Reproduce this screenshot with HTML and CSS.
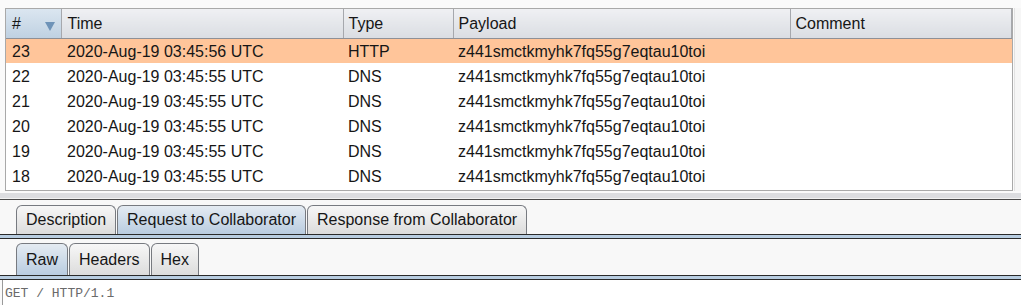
FILE: index.html
```html
<!DOCTYPE html>
<html lang="en">
<head>
    <meta charset="UTF-8">
    <title>Collaborator interactions</title>
    <link rel="stylesheet" href="styles.css">
</head>
<body>
    <div class="results-wrap">
        <div class="results">
            <table class="grid">
                <thead>
                    <tr>
                        <th class="col-num sorted">#<span class="sort-arrow"></span></th>
                        <th class="col-time">Time</th>
                        <th class="col-type">Type</th>
                        <th class="col-payload">Payload</th>
                        <th>Comment</th>
                    </tr>
                </thead>
                <tbody>
                    <tr class="selected">
                        <td>23</td><td>2020-Aug-19 03:45:56 UTC</td><td>HTTP</td><td>z441smctkmyhk7fq55g7eqtau10toi</td><td></td>
                    </tr>
                    <tr>
                        <td>22</td><td>2020-Aug-19 03:45:55 UTC</td><td>DNS</td><td>z441smctkmyhk7fq55g7eqtau10toi</td><td></td>
                    </tr>
                    <tr>
                        <td>21</td><td>2020-Aug-19 03:45:55 UTC</td><td>DNS</td><td>z441smctkmyhk7fq55g7eqtau10toi</td><td></td>
                    </tr>
                    <tr>
                        <td>20</td><td>2020-Aug-19 03:45:55 UTC</td><td>DNS</td><td>z441smctkmyhk7fq55g7eqtau10toi</td><td></td>
                    </tr>
                    <tr>
                        <td>19</td><td>2020-Aug-19 03:45:55 UTC</td><td>DNS</td><td>z441smctkmyhk7fq55g7eqtau10toi</td><td></td>
                    </tr>
                    <tr>
                        <td>18</td><td>2020-Aug-19 03:45:55 UTC</td><td>DNS</td><td>z441smctkmyhk7fq55g7eqtau10toi</td><td></td>
                    </tr>
                </tbody>
            </table>
        </div>
        <div class="scroll-edge"></div>
    </div>

    <div class="splitter"></div>

    <div class="tab-bar outer">
        <div class="tab">Description</div>
        <div class="tab active">Request to Collaborator</div>
        <div class="tab">Response from Collaborator</div>
    </div>
    <div class="tab-rule"></div>

    <div class="tab-bar inner">
        <div class="tab active">Raw</div>
        <div class="tab">Headers</div>
        <div class="tab">Hex</div>
    </div>
    <div class="tab-rule"></div>

    <div class="editor">GET / HTTP/1.1</div>
</body>
</html>
```

FILE: styles.css
```css
body {
    margin: 0;
    background: #fafafa;
    font-family: "Liberation Sans", Arial, sans-serif;
    font-size: 16px;
    color: #161616;
    height: 305px;
    overflow: hidden;
}
.results-wrap {
    display: flex;
    padding-top: 8px;
    padding-left: 5px;
}
.results {
    flex: 1;
    height: 181px;
    border: 1px solid #a9a9a9;
    background: #ffffff;
    overflow: hidden;
}
.scroll-edge {
    width: 6px;
    border-left: 1px solid #e2e2e2;
    margin-left: 1px;
    background: #f6f6f6;
}
.grid {
    width: 100%;
    border-collapse: collapse;
    table-layout: fixed;
}
.grid th {
    box-sizing: border-box;
    height: 29px;
    padding: 2px 0 0 5px;
    text-align: left;
    font-weight: normal;
    background: linear-gradient(#eff0f3, #dadde2);
    border-right: 1px solid #a6a8ad;
    border-bottom: 1px solid #8e9096;
}
.grid th.col-num {
    width: 55px;
    padding-left: 6px;
}
.grid th.col-time {
    width: 282px;
    padding-left: 6px;
}
.grid th.col-type {
    width: 110px;
}
.grid th.col-payload {
    width: 337px;
}
.grid th.sorted {
    background: linear-gradient(#dbe6f0, #bfd1e2);
}
.sort-arrow {
    float: right;
    margin: 7px 6px 0 0;
    width: 0;
    height: 0;
    border-left: 5px solid transparent;
    border-right: 5px solid transparent;
    border-top: 9px solid #6e93b8;
}
.grid td {
    box-sizing: border-box;
    height: 25px;
    padding: 2px 0 0 5px;
    white-space: nowrap;
    overflow: hidden;
}
.grid td:first-child,
.grid td:nth-child(2) {
    padding-left: 6px;
}
.grid tr.selected td {
    background: #ffc59a;
}
.splitter {
    margin-top: 2px;
    height: 5px;
    background: #dcdde0;
    border-bottom: 1px solid #f2f2f2;
}
.tab-bar {
    display: flex;
    align-items: flex-end;
    gap: 1px;
    padding-left: 16px;
    border-top: 1px solid #4a4a4a;
    background: #f8f8f8;
}
.tab-bar.outer {
    height: 34px;
}
.tab-bar.inner {
    border-top: none;
    height: 36px;
}
.tab {
    padding: 0 9px;
    border: 1px solid #777a80;
    border-bottom: none;
    border-radius: 6px 6px 0 0;
    background: linear-gradient(#f7f7f7, #dcdcdc);
    line-height: 28px;
}
.tab-bar.inner .tab {
    line-height: 31px;
}
.tab.active {
    background: linear-gradient(#e4ebf2, #b9cce0);
}
.tab-rule {
    height: 3px;
    background: #b8cde1;
    border-top: 1px solid #2a2a2a;
    border-bottom: 1px solid #2a2a2a;
}
.editor {
    margin-left: 2px;
    border-left: 1px solid #9a9a9a;
    background: #ffffff;
    height: 30px;
    padding: 6px 0 0 2px;
    font-family: "Liberation Mono", "Courier New", monospace;
    font-size: 13px;
    color: #6a6a6a;
}
```
